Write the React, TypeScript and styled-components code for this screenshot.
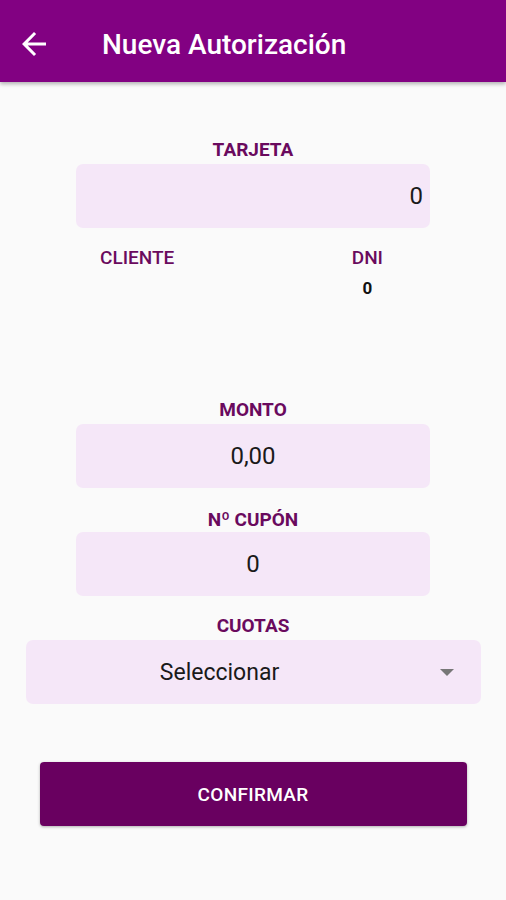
import React from "react";
import styled, { createGlobalStyle } from "styled-components";

const Global = createGlobalStyle`
  html, body { margin: 0; padding: 0; background: #fafafa; }
  body { font-family: Roboto, "Noto Sans", "Liberation Sans", sans-serif; }
  * { box-sizing: border-box; }
`;

const Screen = styled.div`
  width: 506px;
  height: 900px;
  background: #fafafa;
  display: flex;
  flex-direction: column;
`;

const AppBar = styled.header`
  height: 82px;
  background: #820182;
  display: flex;
  align-items: center;
  padding: 6px 0 0 16px;
  box-shadow: 0 2px 4px rgba(0, 0, 0, 0.3);
  flex-shrink: 0;
`;

const BackButton = styled.div`
  width: 36px;
  height: 36px;
  display: flex;
  color: #fff;
`;

const Title = styled.h1`
  margin: 0 0 0 50px;
  font-size: 28px;
  font-weight: 500;
  color: #fff;
`;

const Content = styled.main`
  display: flex;
  flex-direction: column;
  align-items: center;
`;

const Label = styled.div<{ $mt: number }>`
  margin-top: ${(p) => p.$mt}px;
  height: 20px;
  line-height: 20px;
  font-size: 19px;
  font-weight: 700;
  color: #6a0a5e;
  text-align: center;
`;

const InputBox = styled.div<{ $mt: number; $align?: string }>`
  margin-top: ${(p) => p.$mt}px;
  width: 354px;
  height: 64px;
  border-radius: 7px;
  background: #f5e7f8;
  display: flex;
  align-items: center;
  justify-content: ${(p) => p.$align || "center"};
  padding: 0 7px;
  font-size: 24px;
  color: #1a1a1a;
`;

const InfoRow = styled.div`
  margin-top: 20px;
  width: 354px;
  display: flex;
  justify-content: space-between;
  padding: 0 47px 0 24px;
`;

const InfoCol = styled.div`
  display: flex;
  flex-direction: column;
  align-items: center;
`;

const InfoLabel = styled.div`
  height: 20px;
  line-height: 20px;
  font-size: 19px;
  font-weight: 500;
  color: #6a0a5e;
`;

const InfoValue = styled.div`
  margin-top: 10px;
  height: 20px;
  line-height: 20px;
  font-size: 17px;
  font-weight: 700;
  color: #111;
`;

const Select = styled.div`
  margin-top: 4px;
  width: 455px;
  height: 64px;
  border-radius: 7px;
  background: #f5e7f8;
  display: flex;
  align-items: center;
  padding: 0 27px 0 0;
  font-size: 23px;
  color: #1a1a1a;
`;

const SelectText = styled.div`
  flex: 1;
  text-align: center;
`;

const Caret = styled.div`
  width: 0;
  height: 0;
  border-left: 7px solid transparent;
  border-right: 7px solid transparent;
  border-top: 7px solid #777;
  margin-left: 26px;
`;

const ConfirmButton = styled.button`
  margin-top: 58px;
  width: 427px;
  height: 64px;
  border: none;
  border-radius: 4px;
  background: #690060;
  color: #fff;
  font-family: inherit;
  font-size: 19px;
  font-weight: 500;
  letter-spacing: 0.3px;
  box-shadow: 0 1px 3px rgba(0, 0, 0, 0.3);
`;

export default function App() {
  return (
    <Screen>
      <Global />
      <AppBar>
        <BackButton>
          <svg width="36" height="36" viewBox="0 0 24 24" fill="currentColor">
            <path d="M20 11H7.83l5.59-5.59L12 4l-8 8 8 8 1.41-1.41L7.83 13H20v-2z" />
          </svg>
        </BackButton>
        <Title>Nueva Autorización</Title>
      </AppBar>
      <Content>
        <Label $mt={58}>TARJETA</Label>
        <InputBox $mt={4} $align="flex-end">0</InputBox>
        <InfoRow>
          <InfoCol>
            <InfoLabel>CLIENTE</InfoLabel>
          </InfoCol>
          <InfoCol>
            <InfoLabel>DNI</InfoLabel>
            <InfoValue>0</InfoValue>
          </InfoCol>
        </InfoRow>
        <Label $mt={102}>MONTO</Label>
        <InputBox $mt={4}>0,00</InputBox>
        <Label $mt={22}>Nº CUPÓN</Label>
        <InputBox $mt={2}>0</InputBox>
        <Label $mt={20}>CUOTAS</Label>
        <Select>
          <SelectText>Seleccionar</SelectText>
          <Caret />
        </Select>
        <ConfirmButton>CONFIRMAR</ConfirmButton>
      </Content>
    </Screen>
  );
}
